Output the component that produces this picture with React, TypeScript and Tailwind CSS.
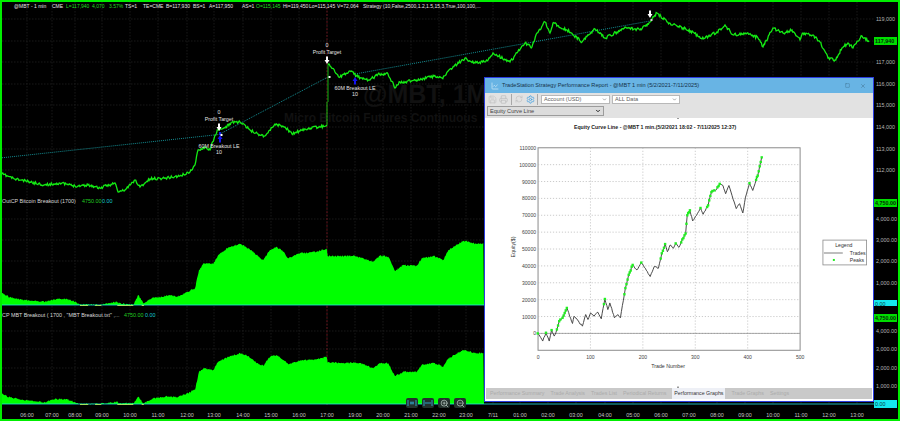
import { Save, Printer, RefreshCw, Settings, ChevronDown, ZoomIn, ZoomOut, Square, X, ChartLine } from "lucide-react";

type P = [number, number];

function rng(seed: number) {
  let s = seed;
  return () => {
    s = (s * 16807) % 2147483647;
    return s / 2147483647;
  };
}

function wiggle(pts: P[], step: number, amp: number, seed: number): P[] {
  const r = rng(seed);
  const out: P[] = [];
  for (let i = 0; i < pts.length - 1; i++) {
    const [x0, y0] = pts[i];
    const [x1, y1] = pts[i + 1];
    const n = Math.max(1, Math.round(Math.abs(x1 - x0) / step));
    for (let k = 0; k < n; k++) {
      const t = k / n;
      out.push([x0 + (x1 - x0) * t, y0 + (y1 - y0) * t + (k === 0 ? 0 : (r() - 0.5) * amp)]);
    }
  }
  out.push(pts[pts.length - 1]);
  return out;
}

const str = (p: P[]) => p.map(([x, y]) => `${x.toFixed(1)},${y.toFixed(1)}`).join(" ");

const priceA: P[] = [[2,174],[15,179],[30,182],[45,185],[60,183],[75,186],[88,185],[100,188],[115,183],[118,192],[125,190],[135,180],[140,187],[150,179],[165,178],[180,176],[190,172],[195,165],[198,150],[205,147],[210,150],[215,135],[218,130],[225,128],[232,122],[240,122],[250,130],[258,134],[265,136],[275,124],[285,127],[292,134],[300,131],[310,128],[320,127],[327,125]];
const priceB: P[] = [[328,65],[330,66],[335,72],[340,77],[350,71],[358,77],[370,80],[378,74],[388,74],[395,88],[400,82],[420,80],[430,76],[442,78],[450,69],[465,58],[475,63],[485,62],[493,53],[510,62],[525,43],[532,47],[537,33],[545,22],[550,33],[553,23],[567,30],[582,42],[595,29],[605,38],[617,32],[625,27],[640,30],[650,22],[657,13],[667,22],[683,28],[693,32],[702,39],[717,32],[725,25],[733,35],[747,33],[758,38],[763,47],[773,28],[783,33],[792,30],[800,40],[803,33],[813,35],[820,42],[828,58],[835,60],[842,48],[848,43],[853,48],[862,36],[869,42]];
const tops1: P[] = [[5,310],[30,322],[60,328],[100,333],[135,335],[145,333],[170,327],[200,326],[225,335],[240,343],[300,345],[350,335],[360,340],[400,345],[415,315],[430,340],[460,322],[490,320],[500,315],[530,320],[560,307],[585,295],[597,240],[610,220],[640,222],[655,195],[685,172],[720,162],[745,175],[770,195],[790,210],[810,180],[830,170],[850,185],[865,205],[900,190],[950,185],[980,176],[983,198],[1065,198],[1090,205],[1120,215],[1140,197],[1165,200],[1185,243],[1210,225],[1250,228],[1265,205],[1300,198],[1330,210],[1345,180],[1390,152],[1430,162],[1450,160]];
const tops2: P[] = [[5,612],[30,622],[60,628],[100,633],[135,637],[145,632],[170,627],[200,627],[225,637],[240,642],[300,642],[350,635],[360,640],[400,640],[415,620],[430,640],[460,625],[490,622],[500,618],[530,622],[560,610],[585,600],[597,545],[610,535],[640,540],[655,515],[685,500],[720,490],[745,498],[770,520],[790,527],[810,500],[830,495],[850,510],[865,523],[900,512],[950,508],[980,500],[983,518],[1065,518],[1090,522],[1120,535],[1140,518],[1165,520],[1185,558],[1210,545],[1250,545],[1265,525],[1300,518],[1330,530],[1345,505],[1390,480],[1430,490],[1450,488]];
const equityRaw: P[] = [[80,582],[95,605],[105,580],[115,605],[122,572],[130,590],[138,570],[145,545],[155,535],[168,505],[185,552],[190,530],[205,548],[215,560],[225,525],[232,540],[240,520],[250,530],[262,518],[272,538],[283,478],[292,510],[298,490],[312,535],[322,525],[330,535],[345,445],[355,405],[367,375],[380,390],[393,368],[405,385],[420,410],[432,380],[445,385],[455,340],[465,312],[472,335],[480,315],[490,325],[497,310],[507,322],[517,298],[527,280],[532,225],[540,210],[548,242],[560,225],[572,203],[580,222],[595,195],[605,155],[620,148],[630,130],[640,135],[648,160],[658,135],[680,205],[690,190],[700,218],[708,170],[720,128],[730,150],[740,118],[745,105],[757,50]];

const equity: P[] = wiggle(equityRaw, 3, 4, 77).map(([x, y]) => [510 + x / 3, 140 + y / 3]);
const peaks: P[] = (() => {
  let best = 1e9;
  const o: P[] = [];
  for (const p of equity) {
    if (p[1] < best - 0.6) {
      best = p[1];
      o.push(p);
    }
  }
  return o;
})();

const hours = [27,52,75,102,130,158,187,214,243,271,299,327,355,383,411,439,466,493,520,548,576,605,633,661,689,717,745,773,801,829,857];
const hourLabels = ["06:00","07:00","08:00","09:00","10:00","11:00","12:00","13:00","14:00","15:00","16:00","17:00","19:00","20:00","21:00","22:00","23:00","7/11","01:00","02:00","03:00","04:00","05:00","06:00","07:00","08:00","09:00","10:00","11:00","12:00","13:00"];

function Grid({ y0, y1, rows }: { y0: number; y1: number; rows: number[] }) {
  return (
    <g stroke="#242424" strokeWidth="0.7" strokeDasharray="1.5 1.5">
      {hours.map((x) => <line key={x} x1={x} x2={x} y1={y0} y2={y1} />)}
      {rows.map((y) => <line key={y} x1={2} x2={874} y1={y} y2={y} />)}
    </g>
  );
}

function Tick({ y, top, label, kind }: { y: number; top: number; label: string; kind?: "green" | "cyan" }) {
  const base = "absolute left-0 w-[23px] h-[8px] leading-[8px] text-[5.4px] whitespace-nowrap pl-[1px] ";
  const cls =
    kind === "green"
      ? "bg-[#00dd00] text-[#06280a] font-bold"
      : kind === "cyan"
        ? "bg-[#14e8ee] text-[#064045]"
        : "text-[#b4b4b4] pl-[2px]";
  return <div className={base + cls} style={{ top: y - top - 4 }}>{label}</div>;
}

function Axis({ top, ticks }: { top: number; ticks: { y: number; label: string; kind?: "green" | "cyan" }[] }) {
  return (
    <div className="relative w-[24px] shrink-0 bg-black">
      {ticks.map((t) => <Tick key={t.label + t.y} top={top} {...t} />)}
    </div>
  );
}

const Arrow = ({ x, y, color, up }: { x: number; y: number; color: string; up?: boolean }) => (
  <path
    fill={color}
    d={up
      ? `M${x} ${y - 4}L${x + 2.5} ${y}H${x + 1}V${y + 3.5}H${x - 1}V${y}H${x - 2.5}Z`
      : `M${x} ${y + 4}L${x + 2.5} ${y}H${x + 1}V${y - 3.5}H${x - 1}V${y}H${x - 2.5}Z`}
  />
);

function Area({ tops, base, offsetBase, neg, seed }: { tops: P[]; base: number; offsetBase: number; neg: [number, number, number][]; seed: number }) {
  const pts = wiggle(tops.map(([x, y]) => [x / 3, 190 + y / 3] as P), 0.7, 1.6, seed);
  return (
    <g>
      <polygon fill="#00ff00" points={`${str(pts)} 484,${base} 2,${base}`} />
      {neg.map(([a, b, d], i) => {
        const r = rng(seed + i + 3);
        const n: P[] = [];
        for (let x = a / 3; x <= b / 3; x += 1) n.push([x, offsetBase + (r() * 0.5 + 0.5) * d]);
        return <polygon key={i} fill="#f4e000" points={`${a / 3},${offsetBase} ${str(n)} ${b / 3},${offsetBase}`} />;
      })}
      <line x1={2} x2={874} y1={base} y2={base} stroke="#22e6e6" strokeWidth="0.8" />
    </g>
  );
}

const Sep = () => <div className="w-px h-[11px] bg-[#a8a8a8] mx-[2px]" />;

function Sel({ label, w }: { label: string; w: string }) {
  return (
    <div className={`${w} h-[9px] bg-white border border-[#b8b8b8] flex items-center justify-between px-[2px] text-[#606060] text-[5.6px]`}>
      <span>{label}</span>
      <ChevronDown size={5} strokeWidth={3} className="text-[#777777]" />
    </div>
  );
}

function EquityChart() {
  const ys = [0, 10000, 20000, 30000, 40000, 50000, 60000, 70000, 80000, 90000, 100000, 110000];
  const yOf = (v: number) => 334 - v * 0.00170;
  const xs = [0, 100, 200, 300, 400, 500];
  const xOf = (n: number) => 537 + n * 0.528;
  return (
    <svg viewBox="485 117 388 272" className="w-full flex-1 block min-h-0">
      <text x="655" y="128" textAnchor="middle" className="text-[5.25px] font-bold" fill="#222222">Equity Curve Line - @MBT 1 min.(5/2/2021 18:02 - 7/11/2025 12:37)</text>
      <rect x="537" y="147" width="264" height="204" fill="none" stroke="#8a8a8a" strokeWidth="1" />
      <g stroke="#b4b4b4" strokeWidth="0.7" strokeDasharray="1.2 1.8">
        {xs.slice(1, 5).map((n) => <line key={n} x1={xOf(n)} x2={xOf(n)} y1={147} y2={351} />)}
        {ys.slice(0, 11).map((v) => <line key={v} x1={537} x2={801} y1={yOf(v)} y2={yOf(v)} />)}
      </g>
      <line x1="537" x2="801" y1="334" y2="334" stroke="#777777" strokeWidth="0.6" />
      <polyline points={str(equity)} fill="none" stroke="#4a4a4a" strokeWidth="1" />
      {peaks.map(([x, y], i) => <rect key={i} x={x - 1.2} y={y - 1.2} width="2.4" height="2.4" fill="#22ee22" />)}
      {ys.map((v) => <text key={v} x="535" y={yOf(v) + 2} textAnchor="end" className="text-[5.1px]" fill="#444444">{v}</text>)}
      {xs.map((n) => <text key={n} x={xOf(n)} y="360" textAnchor="middle" className="text-[5.1px]" fill="#444444">{n}</text>)}
      <text x="668" y="369" textAnchor="middle" className="text-[5.3px]" fill="#333333">Trade Number</text>
      <text transform="translate(514 247) rotate(-90)" textAnchor="middle" className="text-[5.3px]" fill="#333333">Equity($)</text>
      <rect x="824" y="240" width="44" height="25" fill="white" stroke="#8a8a8a" strokeWidth="0.8" />
      <text x="845" y="246.5" textAnchor="middle" className="text-[5.2px]" fill="#333333">Legend</text>
      <line x1="825" x2="844" y1="253" y2="253" stroke="#444444" strokeWidth="0.7" />
      <text x="851" y="255" className="text-[5.2px]" fill="#333333">Trades</text>
      <rect x="834" y="259" width="2" height="2" fill="#22ee22" />
      <text x="851" y="262" className="text-[5.2px]" fill="#333333">Peaks</text>
      <rect x="677" y="116.5" width="2" height="1.5" fill="#999999" />
      <rect x="677" y="387.5" width="2" height="1.5" fill="#999999" />
    </svg>
  );
}

function ReportWindow() {
  const tabs = ["Performance Summary", "Trade Analysis", "Trades List", "Periodical Returns", "Performance Graphs", "Trade Graphs", "Settings"];
  return (
    <div className="absolute left-[482px] top-[75px] w-[390px] h-[325px] border border-[#2a3ce0] bg-white flex flex-col">
      <div className="h-[15px] shrink-0 bg-[#68b4e4] flex items-center pl-[6px] pr-[7px] text-[#16334a] text-[5.6px]">
        <ChartLine size={8} className="text-[#d8eef9] mr-[2px]" />
        <span className="ml-[1px] whitespace-nowrap">TradeStation Strategy Performance Report - @MBT 1 min (5/2/2021-7/11/2025)</span>
        <Square size={5} className="ml-auto text-[#40708f]" />
        <X size={6} className="ml-[10px] text-[#40708f]" />
      </div>
      <div className="h-[25px] shrink-0 bg-[#e2e2e2] flex flex-col gap-[1px] pl-[1px]">
        <div className="h-[12px] flex items-center pl-[2px]">
          <Save size={9} className="text-[#c4c4c4] mr-[2px]" />
          <Printer size={9} className="text-[#bdbdbd] mr-[1px]" />
          <Sep />
          <RefreshCw size={8} className="text-[#c0c0c0] mx-[1px]" />
          <Settings size={9} className="text-[#3c9ee0] ml-[2px]" />
          <Sep />
          <Sel label="Account (USD)" w="w-[69px] ml-px" />
          <Sel label="ALL Data" w="w-[68px] ml-[2px]" />
        </div>
        <div className="w-[117px] h-[10px] ml-[1px] bg-[#dcdcdc] border border-[#9c9c9c] flex items-center justify-between px-[2px] text-[#444444] text-[5.6px]">
          <span>Equity Curve Line</span>
          <ChevronDown size={6} strokeWidth={4} className="text-[#222222]" />
        </div>
      </div>
      <EquityChart />
      <div className="h-[11px] mx-[1px] mb-[2px] shrink-0 bg-[#c9c9c9] flex items-center pl-[4px] gap-[6px] text-[5.3px] text-[#ababab] whitespace-nowrap">
        {tabs.map((t) => (
          <span key={t} className={t === "Performance Graphs" ? "bg-[#eef0f6] text-[#333333] h-full px-[2px] flex items-center" : ""}>{t}</span>
        ))}
      </div>
    </div>
  );
}

export default function App() {
  const priceTicks = [
    { y: 19, label: "119,000" },
    { y: 41, label: "117,940", kind: "green" as const },
    { y: 62, label: "117,000" },
    { y: 84, label: "116,000" },
    { y: 105, label: "115,000" },
    { y: 127, label: "114,000" },
    { y: 149, label: "113,000" },
    { y: 170, label: "112,000" },
  ];
  const t2 = [
    { y: 203, label: "4,750.00", kind: "green" as const },
    { y: 219, label: "4,000.00" },
    { y: 240, label: "3,000.00" },
    { y: 261, label: "2,000.00" },
    { y: 283, label: "1,000.00" },
    { y: 304, label: "0.00", kind: "cyan" as const },
  ];
  const t3 = [
    { y: 318, label: "4,750.00", kind: "green" as const },
    { y: 331, label: "4,000.00" },
    { y: 349, label: "3,000.00" },
    { y: 368, label: "2,000.00" },
    { y: 386, label: "1,000.00" },
    { y: 404, label: "0.00", kind: "cyan" as const },
  ];
  const head = "absolute whitespace-nowrap text-[5.4px] leading-[8px] ";
  const bar: [number, string, string][] = [
    [14, "@MBT - 1 min", "#e6e6e6"], [52, "CME", "#e6e6e6"], [66, "L=117,940", "#22dd22"], [92, "4,070", "#22dd22"], [109, "3.57%", "#22dd22"], [125, "TS=1", "#e6e6e6"], [143, "TE=CME", "#e6e6e6"], [166, "B=117,930", "#e6e6e6"], [193, "BS=1", "#e6e6e6"], [209, "A=117,950", "#e6e6e6"], [242, "AS=1", "#e6e6e6"], [256, "O=115,145", "#22dd22"], [283, "Hi=119,450", "#e6e6e6"], [309, "Lo=115,145", "#e6e6e6"], [337, "V=72,064", "#e6e6e6"], [363, "Strategy (10,False,2500,1.2,1.5,15,3,True,100,100,...", "#e6e6e6"],
  ];
  return (
    <div className="relative w-[900px] h-[421px] overflow-hidden bg-black border-2 border-[#00ee00] flex flex-col font-['Liberation_Sans',sans-serif]">
      <div className="flex h-[195px] shrink-0">
        <div className="relative w-[872px] shrink-0">
          <svg viewBox="2 2 872 195" className="block w-full h-full">
            <Grid y0={2} y1={197} rows={[19, 41, 62, 84, 105, 127, 149, 170]} />
            <text x="363" y="103" className="text-[25px] font-bold" fill="#111111">@MBT, 1Min</text>
            <text x="284" y="122" className="text-[12px] font-bold" fill="#111111">Micro Bitcoin Futures Continuous</text>
            <line x1="0" x2="219" y1="158" y2="134.5" stroke="#159ba0" strokeWidth="0.9" strokeDasharray="1 1" />
            <line x1="219" x2="328" y1="134.5" y2="77" stroke="#159ba0" strokeWidth="0.9" strokeDasharray="1 1" />
            <line x1="355" x2="650" y1="74" y2="21" stroke="#159ba0" strokeWidth="0.9" strokeDasharray="1 1" />
            <line x1="327" x2="327" y1="7" y2="197" stroke="#8a1420" strokeWidth="0.7" strokeDasharray="2 1.5" />
            <polyline points={str(wiggle(priceA, 0.8, 2.6, 11))} fill="none" stroke="#14ea14" strokeWidth="1.3" />
            <polyline points={str([[327, 125], [327, 102]] as P[])} fill="none" stroke="#10e010" strokeWidth="0.8" />
            <polyline points={str([[328, 102], [328, 65]] as P[])} fill="none" stroke="#10e010" strokeWidth="0.8" />
            <polyline points={str(wiggle(priceB, 0.8, 3, 23))} fill="none" stroke="#14ea14" strokeWidth="1.3" />
            <g fill="#e4e4e4" textAnchor="middle" className="text-[5.3px]">
              <text x="219" y="114">0</text>
              <text x="219" y="120.5">Profit Target</text>
              <text x="219" y="147.5">60M Breakout LE</text>
              <text x="219" y="153.5">10</text>
              <text x="327" y="47">0</text>
              <text x="327" y="53.5">Profit Target</text>
              <text x="355" y="89.5">60M Breakout LE</text>
              <text x="355" y="96">10</text>
            </g>
            <Arrow x={219} y={127} color="#ffffff" />
            <Arrow x={220} y={139} color="#1414f0" up />
            <rect x="219" y="132" width="2" height="3" fill="#1414f0" />
            <rect x="220.5" y="134" width="2" height="2" fill="#ffffff" />
            <Arrow x={327} y={60} color="#ffffff" />
            <rect x="328.5" y="76" width="2" height="2" fill="#ffffff" />
            <Arrow x={355} y={81} color="#1414f0" up />
            <Arrow x={650} y={14} color="#ffffff" />
            <rect x="650.5" y="19" width="2" height="2" fill="#d0d0d0" />
          </svg>
          <div className="absolute left-0 top-0 h-[8px] w-full">
            {bar.map(([x, t, c]) => (
              <span key={x} className="absolute top-0 whitespace-nowrap text-[5px] leading-[8px]" style={{ left: x - 2, color: c }}>{t}</span>
            ))}
          </div>
        </div>
        <Axis top={2} ticks={priceTicks} />
      </div>

      <div className="flex h-[109px] shrink-0">
        <div className="relative w-[872px] shrink-0">
          <svg viewBox="2 197 872 109" className="block w-full h-full">
            <Grid y0={197} y1={305} rows={[219, 240, 261, 283]} />
            <line x1="327" x2="327" y1="197" y2="306" stroke="#8a1420" strokeWidth="0.7" strokeDasharray="2 1.5" />
            <Area tops={tops1} base={305} offsetBase={305} seed={31} neg={[[240, 265, 2], [285, 305, 1.5], [352, 400, 5], [425, 432, 2.5]]} />
          </svg>
          <span className={head + "left-0 top-0 text-[#d8d8d8]"}>OutCP Bitcoin Breakout (1700)</span>
          <span className={head + "left-[80px] top-0 text-[#22cc22]"}>4750.00</span>
          <span className={head + "left-[100px] top-0 text-[#14c8d0]"}>0.00</span>
        </div>
        <Axis top={197} ticks={t2} />
      </div>

      <div className="flex h-[99px] shrink-0">
        <div className="relative w-[872px] shrink-0">
          <svg viewBox="2 306 872 99" className="block w-full h-full">
            <Grid y0={306} y1={404} rows={[331, 349, 368, 386]} />
            <line x1="327" x2="327" y1="306" y2="405" stroke="#8a1420" strokeWidth="0.7" strokeDasharray="2 1.5" />
            <Area tops={tops2} base={404} offsetBase={404} seed={47} neg={[[240, 265, 2], [285, 305, 1.5], [352, 400, 5], [425, 432, 2.5]]} />
          </svg>
          <span className={head + "left-0 top-[5px] text-[#d8d8d8]"}>CP MBT Breakout ( 1700 , "MBT Breakout.txt" ,...</span>
          <span className={head + "left-[122px] top-[5px] text-[#22cc22]"}>4750.00</span>
          <span className={head + "left-[143px] top-[5px] text-[#14c8d0]"}>0.00</span>
        </div>
        <Axis top={306} ticks={t3} />
      </div>

      <div className="relative flex-1">
        {hours.map((x, i) => (
          <span key={i} className="absolute top-[6px] -translate-x-1/2 text-[5.4px] leading-[8px] text-[#c4c4c4]" style={{ left: x - 2 }}>{hourLabels[i]}</span>
        ))}
      </div>

      <div className="absolute left-[404px] top-[396px] flex gap-[4px]">
        {["a", "b", "c", "d"].map((k) => (
          <div key={k} className="w-[12px] h-[10px] rounded-[2px] bg-[#23302c] flex items-center justify-center">
            {k === "a" && (
              <svg width="10" height="8" viewBox="0 0 10 8" fill="none" stroke="#2f9ec0" strokeWidth="1">
                <path d="M1 1V7M9 1V7M3 4H7M4 2.5V5.5M6 2.5V5.5" />
              </svg>
            )}
            {k === "b" && (
              <svg width="10" height="8" viewBox="0 0 10 8" fill="none" stroke="#2f9ec0" strokeWidth="1">
                <path d="M1 1V7M9 1V7M2 4H8" />
              </svg>
            )}
            {k === "c" && <ZoomIn size={9} className="text-[#b8c8c0]" />}
            {k === "d" && <ZoomOut size={9} className="text-[#b8c8c0]" />}
          </div>
        ))}
      </div>

      <ReportWindow />
    </div>
  );
}
